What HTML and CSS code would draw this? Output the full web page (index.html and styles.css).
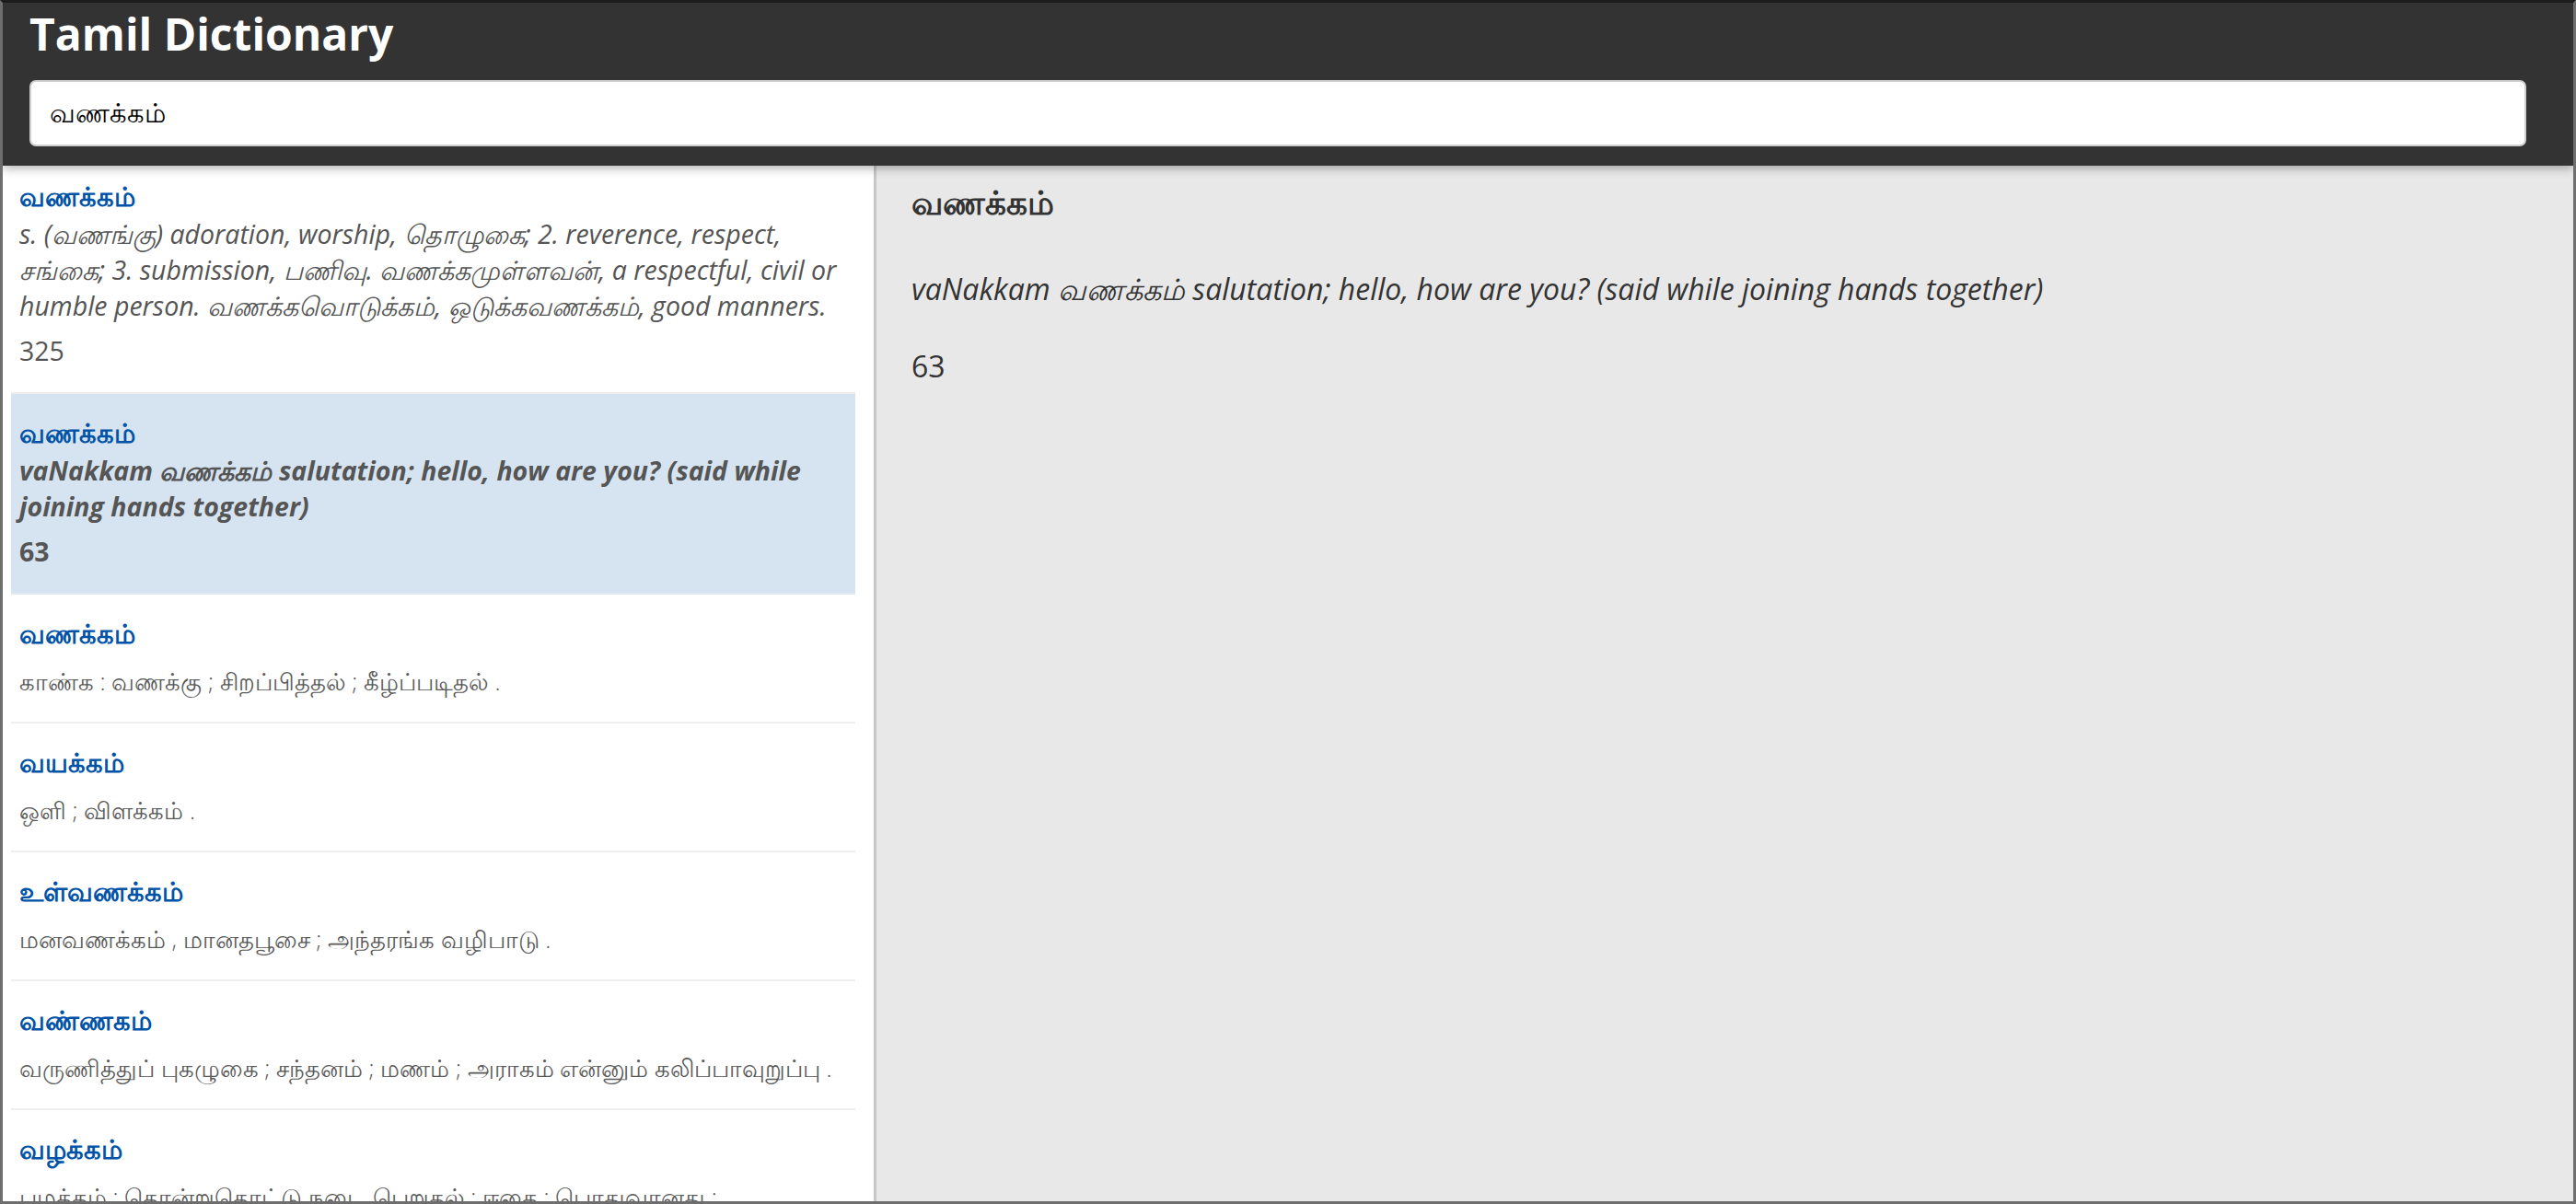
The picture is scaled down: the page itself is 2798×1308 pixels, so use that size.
FILE: index.html
```html
<!DOCTYPE html>
<html lang="ta">
  <head>
    <meta charset="UTF-8" />
    <meta name="viewport" content="width=device-width, initial-scale=1.0" />
    <title>Tamil Dictionary</title>
    <link rel="stylesheet" href="styles.css">
  </head>
  <body>
    <div class="app">
      <header class="topbar">
        <h1>Tamil Dictionary</h1>
        <input class="search" type="text" value="வணக்கம்" />
      </header>

      <main class="content">
        <ul class="results">
          <li class="entry">
            <div class="word">வணக்கம்</div>
            <div class="meaning"><i>s. (வணங்கு) adoration, worship, தொழுகை; 2. reverence, respect, சங்கை; 3. submission, பணிவு. வணக்கமுள்ளவன், a respectful, civil or humble person. வணக்கவொடுக்கம், ஒடுக்கவணக்கம், good manners.</i></div>
            <div class="source">325</div>
          </li>
          <li class="entry selected">
            <div class="word">வணக்கம்</div>
            <div class="meaning"><i>vaNakkam வணக்கம் salutation; hello, how are you? (said while joining hands together)</i></div>
            <div class="source">63</div>
          </li>
          <li class="entry">
            <div class="word">வணக்கம்</div>
            <div class="meaning plain">காண்க : வணக்கு ; சிறப்பித்தல் ; கீழ்ப்படிதல் .</div>
          </li>
          <li class="entry">
            <div class="word">வயக்கம்</div>
            <div class="meaning plain">ஒளி ; விளக்கம் .</div>
          </li>
          <li class="entry">
            <div class="word">உள்வணக்கம்</div>
            <div class="meaning plain">மனவணக்கம் , மானதபூசை ; அந்தரங்க வழிபாடு .</div>
          </li>
          <li class="entry">
            <div class="word">வண்ணகம்</div>
            <div class="meaning plain">வருணித்துப் புகழுகை ; சந்தனம் ; மணம் ; அராகம் என்னும் கலிப்பாவுறுப்பு .</div>
          </li>
          <li class="entry">
            <div class="word">வழக்கம்</div>
            <div class="meaning plain">பழக்கம் ; தொன்றுதொட்டு நடை பெறுதல் ; ஈகை ; பொதுவானது ;</div>
          </li>
        </ul>

        <section class="detail">
          <h3>வணக்கம்</h3>
          <p><i>vaNakkam வணக்கம் salutation; hello, how are you? (said while joining hands together)</i></p>
          <p>63</p>
        </section>
      </main>
    </div>
  </body>
</html>
```

FILE: styles.css
```css
html,
body {
  margin: 0;
  padding: 0;
  height: 100%;
}

body {
  font-family: "Open Sans", "Noto Sans", sans-serif;
  font-size: 28.5px;
  color: #333;
  overflow: hidden;
}

.app {
  height: 100vh;
  box-sizing: border-box;
  border: 3px solid #6e6e6e;
  border-top-color: #1c1c1c;
  display: flex;
  flex-direction: column;
  overflow: hidden;
}

/* top bar */
.topbar {
  background-color: #333;
  padding: 0 51px 21px 29px;
  box-shadow: 0 3px 10px rgba(0, 0, 0, 0.3);
  position: relative;
  z-index: 1;
}

.topbar h1 {
  margin: 0 0 16px;
  color: #fff;
  font-size: 48px;
  line-height: 68px;
  font-weight: 700;
}

.search {
  display: block;
  width: 100%;
  height: 72px;
  box-sizing: border-box;
  margin: 0;
  padding: 0 20px;
  border: 2px solid #cfcfcf;
  border-radius: 7px;
  background: #fff;
  color: #000;
  font-family: "Open Sans", "Noto Sans", sans-serif;
  font-size: 28.5px;
}

/* body */
.content {
  flex: 1;
  min-height: 0;
  display: flex;
}

.results {
  width: 949px;
  box-sizing: border-box;
  margin: 0;
  padding: 0 20px 0 9px;
  list-style: none;
  background: #fff;
  border-right: 3px solid #c8c8c8;
  overflow: hidden;
}

.entry {
  padding: 23px 9px 24px;
  border-bottom: 2px solid #eee;
  color: #555;
}

.entry:first-child {
  padding-top: 14px;
}

.entry.selected {
  background-color: #d6e4f1;
  font-weight: 700;
  border-bottom-color: #e4eaf1;
}

.word {
  color: #0053a6;
  font-weight: 700;
}

.meaning {
  line-height: 39px;
}

.meaning.plain {
  margin-top: 11px;
  font-size: 25.5px;
  font-weight: 300;
  color: #5a5a5a;
}

.source {
  margin: 10px 0 2px;
}

.detail {
  flex: 1;
  background-color: #e8e8e8;
  padding: 0 38px;
  color: #333;
  font-size: 32px;
}

.detail h3 {
  font-size: 36px;
  margin: 15px 0 46px;
}

.detail p {
  margin: 0 0 38px;
}
```
